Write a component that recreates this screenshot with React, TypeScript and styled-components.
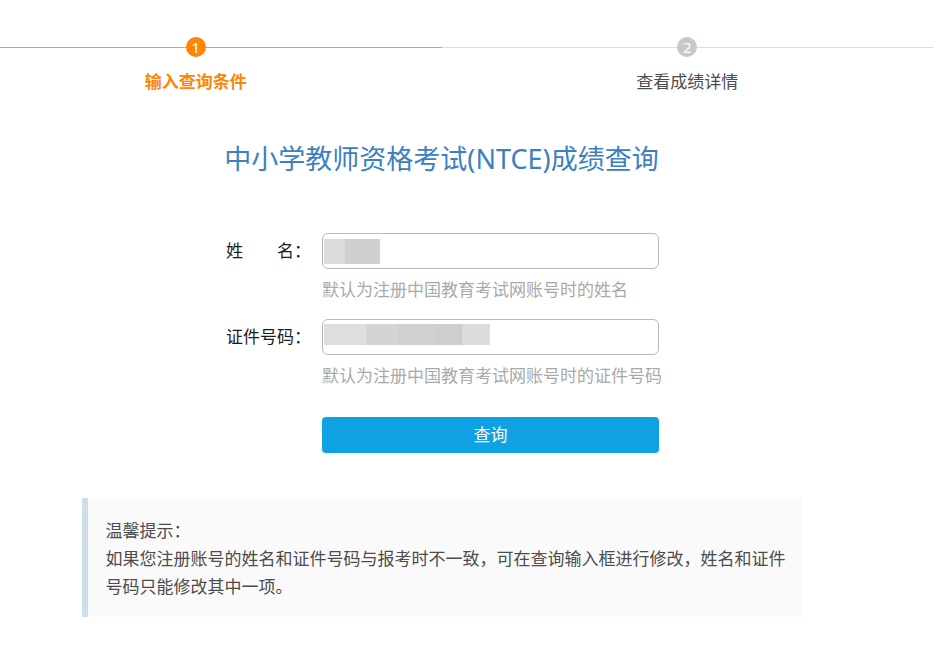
import React from 'react';
import styled, { createGlobalStyle } from 'styled-components';

const GlobalStyle = createGlobalStyle`
  *, *::before, *::after { box-sizing: border-box; }
  body {
    margin: 0;
    background: #fff;
    color: #4c4c4c;
    font-family: "Noto Sans", "Noto Sans CJK SC", sans-serif;
    font-size: 17px;
    line-height: 28px;
    overflow-x: hidden;
  }
`;

const Page = styled.main`
  display: flex;
  flex-direction: column;
  align-items: center;
  margin: 0 19px 0 -50px;
  padding: 37px 0 28px;
`;

const Steps = styled.ol`
  display: grid;
  grid-template-columns: 1fr 1fr;
  align-self: stretch;
  margin: 0;
  padding: 0;
  list-style: none;
`;

const Step = styled.li<{ $active?: boolean }>`
  display: flex;
  flex-direction: column;
  gap: 11px;
  color: ${(p) => (p.$active ? '#ff8604' : '#4c4c4c')};
  font-weight: ${(p) => (p.$active ? 700 : 400)};
  text-align: center;
`;

const Track = styled.div<{ $active?: boolean }>`
  display: flex;
  align-items: center;

  &::before,
  &::after {
    content: '';
    flex: 1;
    height: 1px;
    background: ${(p) => (p.$active ? '#dba24c' : '#dcdcdc')};
  }
`;

const Badge = styled.span<{ $active?: boolean }>`
  width: 20px;
  height: 20px;
  border-radius: 50%;
  background: ${(p) => (p.$active ? '#ff8604' : '#c8c8c8')};
  color: #fff;
  font-size: 15px;
  font-weight: 400;
  line-height: 20px;
`;

const Title = styled.h1`
  margin: 41px 0 0;
  color: #3d80c2;
  font-size: 27px;
  font-weight: 400;
  line-height: 44px;
`;

const Form = styled.form`
  display: grid;
  grid-template-columns: 96px minmax(0, 337px);
  row-gap: 15px;
  margin-top: 52px;
  padding-left: 2px;
`;

const Label = styled.label`
  display: flex;
  align-items: center;
  height: 36px;
  color: #1c1c1c;
`;

const LabelText = styled.span`
  display: flex;
  justify-content: space-between;
  width: 68px;
`;

const Field = styled.div`
  position: relative;
  white-space: nowrap;
`;

const Input = styled.input`
  display: block;
  width: 100%;
  height: 36px;
  padding: 0 10px;
  border: 1px solid #b9b9b9;
  border-radius: 6px;
  background: #fff;
  color: #333;
  font: inherit;
  outline: none;
`;

const Mask = styled.span<{ $wide?: boolean }>`
  position: absolute;
  top: ${(p) => (p.$wide ? '5px' : '6px')};
  left: 2px;
  width: ${(p) => (p.$wide ? '166px' : '56px')};
  height: ${(p) => (p.$wide ? '21px' : '25px')};
  background: ${(p) =>
    p.$wide
      ? 'linear-gradient(90deg, #dededd 42px, #d2d5d4 42px 73px, #cfd1d0 73px 111px, #cccfce 111px 138px, #dcdddc 138px)'
      : 'linear-gradient(90deg, #dadcdb 21px, #d0cfce 21px)'};
  pointer-events: none;
`;

const Hint = styled.p`
  margin: 7px 0 0;
  color: #a9a9a9;
`;

const Submit = styled.button`
  grid-column: 2;
  height: 36px;
  margin-top: 12px;
  padding: 0;
  border: 0;
  border-radius: 4px;
  background: #0fa2e3;
  color: #fff;
  font: inherit;
  cursor: pointer;
`;

const Notice = styled.aside`
  width: 100%;
  max-width: 720px;
  margin-top: 45px;
  padding: 19px 16px 16px 18px;
  border-left: 6px solid #cfdeeb;
  background: #fafafa;

  p { margin: 0; }
`;

export default function App() {
  return (
    <>
      <GlobalStyle />
      <Page>
        <Steps>
          <Step $active aria-current="step">
            <Track $active><Badge $active>1</Badge></Track>
            输入查询条件
          </Step>
          <Step>
            <Track><Badge>2</Badge></Track>
            查看成绩详情
          </Step>
        </Steps>
        <Title>中小学教师资格考试(NTCE)成绩查询</Title>
        <Form onSubmit={(e) => e.preventDefault()}>
          <Label htmlFor="name">
            <LabelText><span>姓</span><span>名</span></LabelText>：
          </Label>
          <Field>
            <Input id="name" type="text" aria-describedby="name-hint" />
            <Mask />
            <Hint id="name-hint">默认为注册中国教育考试网账号时的姓名</Hint>
          </Field>
          <Label htmlFor="id-number">
            <LabelText>证件号码</LabelText>：
          </Label>
          <Field>
            <Input id="id-number" type="text" aria-describedby="id-hint" />
            <Mask $wide />
            <Hint id="id-hint">默认为注册中国教育考试网账号时的证件号码</Hint>
          </Field>
          <Submit type="submit">查询</Submit>
        </Form>
        <Notice>
          <p>温馨提示：</p>
          <p>如果您注册账号的姓名和证件号码与报考时不一致，可在查询输入框进行修改，姓名和证件号码只能修改其中一项。</p>
        </Notice>
      </Page>
    </>
  );
}
